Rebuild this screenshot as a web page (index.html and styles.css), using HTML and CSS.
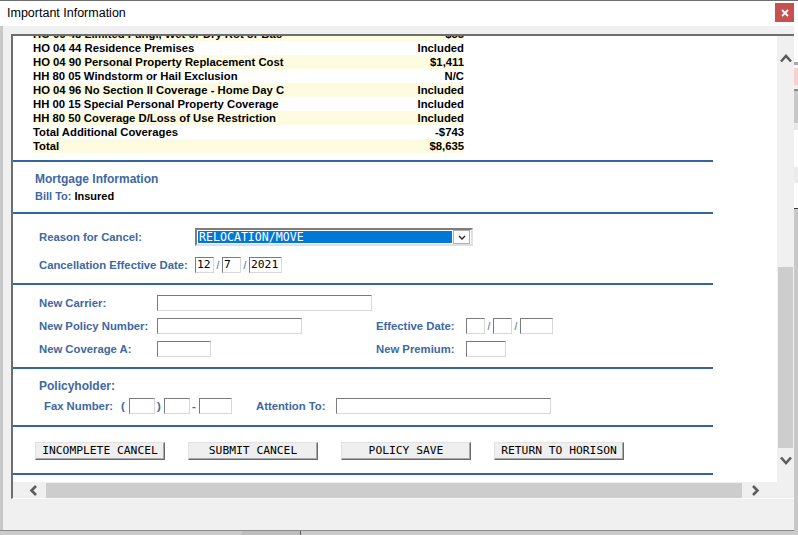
FILE: index.html
```html
<!DOCTYPE html>
<html>
<head>
<meta charset="utf-8">
<title>Important Information</title>
<link rel="stylesheet" href="styles.css">
</head>
<body>
<div class="screen">
  <div class="window">
    <div class="titlebar">
      <span class="title">Important Information</span>
      <div class="close"><svg width="8" height="8" viewBox="0 0 8 8"><path d="M1 1 L7 7 M7 1 L1 7" stroke="#fff" stroke-width="1.8" fill="none"/></svg></div>
    </div>
    <div class="wbody">
      <div class="band"></div>
      <div class="frame">
        <div class="viewport">
          <div class="content">
            <div class="cov-table">
              <div class="row alt"><span>HO 06 48 Limited Fungi, Wet or Dry Rot or Bac</span><span>$55</span></div>
              <div class="row"><span>HO 04 44 Residence Premises</span><span>Included</span></div>
              <div class="row alt"><span>HO 04 90 Personal Property Replacement Cost</span><span>$1,411</span></div>
              <div class="row"><span>HH 80 05 Windstorm or Hail Exclusion</span><span>N/C</span></div>
              <div class="row alt"><span>HO 04 96 No Section II Coverage - Home Day C</span><span>Included</span></div>
              <div class="row"><span>HH 00 15 Special Personal Property Coverage</span><span>Included</span></div>
              <div class="row alt"><span>HH 80 50 Coverage D/Loss of Use Restriction</span><span>Included</span></div>
              <div class="row"><span>Total Additional Coverages</span><span>-$743</span></div>
              <div class="row alt"><span>Total</span><span>$8,635</span></div>
            </div>
            <div class="rule"></div>
            <div class="sec-mort">
              <div class="heading">Mortgage Information</div>
              <div class="bill"><span class="lbl">Bill To:</span><span class="val">Insured</span></div>
            </div>
            <div class="rule"></div>
            <div class="sec-cancel">
              <span class="lbl">Reason for Cancel:</span>
              <div class="select">
                <div class="select-val">RELOCATION/MOVE</div>
                <div class="select-btn"><svg width="8" height="5" viewBox="0 0 8 5"><path d="M1 1 L4 4 L7 1" stroke="#222" stroke-width="1.3" fill="none"/></svg></div>
              </div>
              <span class="lbl">Cancellation Effective Date:</span>
              <div class="date">
                <div class="fld w19">12</div><span class="sep">/</span><div class="fld w19">7</div><span class="sep">/</span><div class="fld w33">2021</div>
              </div>
            </div>
            <div class="rule"></div>
            <div class="sec-new">
              <span class="lbl">New Carrier:</span>
              <div class="fld w215"></div>
              <span></span>
              <span></span>
              <span class="lbl">New Policy Number:</span>
              <div class="fld w145"></div>
              <span class="lbl">Effective Date:</span>
              <div class="date">
                <div class="fld w19"></div><span class="sep">/</span><div class="fld w19"></div><span class="sep">/</span><div class="fld w33"></div>
              </div>
              <span class="lbl">New Coverage A:</span>
              <div class="fld w54"></div>
              <span class="lbl">New Premium:</span>
              <div class="fld w40"></div>
            </div>
            <div class="rule"></div>
            <div class="sec-ph">
              <div class="heading">Policyholder:</div>
              <div class="fax">
                <span class="lbl fax-lbl">Fax Number:</span>
                <span class="lbl paren-l">(</span>
                <div class="fld w26"></div>
                <span class="lbl paren-r">)</span>
                <div class="fld w26"></div>
                <span class="lbl dash">-</span>
                <div class="fld w33"></div>
                <span class="lbl att-lbl">Attention To:</span>
                <div class="fld w215"></div>
              </div>
            </div>
            <div class="rule"></div>
            <div class="sec-btns">
              <div class="btn">INCOMPLETE CANCEL</div>
              <div class="btn">SUBMIT CANCEL</div>
              <div class="btn">POLICY SAVE</div>
              <div class="btn">RETURN TO HORISON</div>
            </div>
            <div class="rule"></div>
          </div>
        </div>
        <div class="vscroll">
          <div class="vs-top"></div>
          <div class="vs-arrow"><svg width="12" height="9" viewBox="0 0 12 9"><path d="M1 7.5 L6 2 L11 7.5" stroke="#5c5c5c" stroke-width="2.6" fill="none"/></svg></div>
          <div class="vs-track"></div>
          <div class="vs-thumb"></div>
          <div class="vs-gap"></div>
          <div class="vs-arrow"><svg width="12" height="9" viewBox="0 0 12 9"><path d="M1 1.5 L6 7 L11 1.5" stroke="#5c5c5c" stroke-width="2.6" fill="none"/></svg></div>
        </div>
        <div class="hscroll">
          <div class="hs-left"><svg width="9" height="11" viewBox="0 0 9 11"><path d="M7 1 L2.5 5.5 L7 10" stroke="#5c5c5c" stroke-width="2.6" fill="none"/></svg></div>
          <div class="hs-thumb"></div>
          <div class="hs-right"><svg width="9" height="11" viewBox="0 0 9 11"><path d="M2 1 L6.5 5.5 L2 10" stroke="#5c5c5c" stroke-width="2.6" fill="none"/></svg></div>
        </div>
      </div>
      <div class="wfoot"></div>
    </div>
  </div>
  <div class="outside-right">
    <div class="o1"></div><div class="o2"></div><div class="o3"></div><div class="o4"></div><div class="o5"></div><div class="o6"></div><div class="o7"></div><div class="o8"></div><div class="o9"></div><div class="o10"></div><div class="o11"></div><div class="o12"></div>
  </div>
  <div class="outside-bottom"><div class="ob1"></div><div class="ob2"></div></div>
</div>
</body>
</html>
```

FILE: styles.css
```css
html, body {
  margin: 0;
  padding: 0;
  background: #ffffff;
}
.screen {
  width: 798px;
  height: 535px;
  box-sizing: border-box;
  border-top: 1px solid #6f6f6f;
  display: grid;
  grid-template-columns: 794px 4px;
  grid-template-rows: 530px 4px;
  overflow: hidden;
}
.window {
  display: flex;
  flex-direction: column;
  background: #f0f0f0;
  font-family: "Liberation Sans", Arial, sans-serif;
}
.titlebar {
  height: 25px;
  background: #ffffff;
  display: flex;
  justify-content: space-between;
  align-items: flex-start;
}
.title {
  font-size: 12.5px;
  line-height: 24px;
  padding-left: 7px;
  color: #000;
}
.close {
  margin-top: 2px;
  width: 19px;
  height: 19px;
  background: #c75050;
  display: flex;
  align-items: center;
  justify-content: center;
}
.wbody {
  flex: 1;
  display: flex;
  flex-direction: column;
  box-shadow: inset 3px 0 0 #c8c8c8;
}
.band {
  height: 8px;
}
.frame {
  margin-left: 11px;
  display: grid;
  grid-template-columns: 764px 17px;
  grid-template-rows: 446px 16px;
  border-top: 2px solid #6e6e6e;
  border-left: 2px solid #6e6e6e;
  border-bottom: 1px solid #fbfbfb;
}
.viewport {
  background: #ffffff;
  overflow: hidden;
}
.content {
  margin-top: -9px;
  font-size: 11.3px;
  font-weight: bold;
}
.cov-table {
  width: 431px;
  margin-left: 20px;
  margin-bottom: 7px;
  color: #000;
}
.row {
  display: flex;
  justify-content: space-between;
  height: 14px;
  line-height: 14px;
  white-space: nowrap;
}
.row.alt {
  background: #fdfce1;
}
.rule {
  width: 700px;
  height: 2px;
  background: #336699;
}
.lbl {
  color: #3d68a3;
  white-space: nowrap;
  line-height: 14px;
}
.heading {
  color: #3d68a3;
  font-size: 12px;
  line-height: 14px;
}
.sec-mort {
  padding: 10px 0 9px 22px;
}
.bill {
  margin-top: 3px;
  line-height: 14px;
  font-size: 11px;
  display: flex;
}
.bill .val {
  color: #000;
  margin-left: 3px;
}
.sec-cancel {
  padding: 14px 0 10px 26px;
  display: grid;
  grid-template-columns: 156px auto;
  grid-template-rows: 18px 16px;
  row-gap: 11px;
  align-items: center;
  justify-items: start;
}
.select {
  width: 278px;
  height: 18px;
  box-sizing: border-box;
  border: 2px solid;
  border-color: #7d7d7d #e0e0e0 #e0e0e0 #7d7d7d;
  padding: 1px;
  display: flex;
  gap: 1px;
}
.select-val {
  flex: 1;
  background: #0078d7;
  color: #ffffff;
  font-family: "DejaVu Sans Mono", monospace;
  font-weight: normal;
  font-size: 11.6px;
  line-height: 12px;
  padding-left: 1px;
}
.select-btn {
  width: 17px;
  box-sizing: border-box;
  border: 1px solid #adadad;
  background: #fbfbfb;
  display: flex;
  align-items: center;
  justify-content: center;
  margin-top: -1px;
  margin-bottom: -1px;
}
.date {
  display: flex;
  align-items: center;
}
.sep {
  width: 8px;
  text-align: center;
  color: #3d68a3;
  font-weight: normal;
  font-size: 10px;
}
.fld {
  height: 16px;
  box-sizing: border-box;
  border: 1px solid;
  border-color: #7a7a7a #d8d8d8 #d8d8d8 #7a7a7a;
  background: #ffffff;
  font-family: "DejaVu Sans Mono", monospace;
  font-weight: normal;
  font-size: 11.3px;
  line-height: 14px;
  padding-left: 1px;
  color: #000;
}
.w19 { width: 19px; }
.w26 { width: 26px; }
.w33 { width: 33px; }
.w40 { width: 40px; }
.w54 { width: 54px; }
.w145 { width: 145px; }
.w215 { width: 215px; }
.sec-new {
  padding: 10px 0 10px 26px;
  display: grid;
  grid-template-columns: 118px 219px 90px auto;
  grid-template-rows: 16px 16px 16px;
  row-gap: 7px;
  align-items: center;
  justify-items: start;
}
.sec-ph {
  padding: 10px 0 11px 26px;
}
.fax {
  margin-top: 5px;
  height: 16px;
  padding-left: 5px;
  display: flex;
  align-items: center;
}
.fax-lbl { width: 77px; }
.paren-l { width: 8px; }
.paren-r { width: 9px; padding-left: 2px; box-sizing: border-box; }
.dash { width: 9px; padding-left: 2px; box-sizing: border-box; }
.att-lbl { width: 80px; margin-left: 24px; }
.sec-btns {
  padding: 15px 0 13px 22px;
  display: flex;
  gap: 23px;
}
.btn {
  width: 130px;
  height: 18px;
  box-sizing: border-box;
  background: #efefef;
  border: 1px solid;
  border-color: #e2e2e2 #6a6a6a #6a6a6a #e2e2e2;
  box-shadow: inset -1px -1px 0 #a8a8a8;
  font-family: "DejaVu Sans Mono", monospace;
  font-weight: normal;
  font-size: 11.3px;
  line-height: 15px;
  text-align: center;
  color: #000;
  white-space: nowrap;
}
.vscroll {
  background: #f0f0f0;
  display: flex;
  flex-direction: column;
}
.vs-top { height: 14px; }
.vs-arrow {
  height: 16px;
  display: flex;
  align-items: center;
  justify-content: center;
}
.vs-track { height: 201px; }
.vs-thumb {
  height: 181px;
  margin: 0 1px 0 1px;
  background: #cdcdcd;
}
.vs-gap { height: 4px; }
.hscroll {
  grid-column: 1 / 3;
  background: #f0f0f0;
  display: flex;
}
.hs-left {
  width: 33px;
  padding-left: 16px;
  box-sizing: border-box;
  display: flex;
  align-items: center;
}
.hs-thumb {
  width: 696px;
  margin-top: 1px;
  background: #cdcdcd;
}
.hs-right {
  flex: 1;
  padding-left: 9px;
  display: flex;
  align-items: center;
}
.wfoot {
  flex: 1;
  border-bottom: 1px solid #8c8c8c;
}
.outside-right {
  display: flex;
  flex-direction: column;
  background: #c8c8c8;
}
.o1 { height: 61px; background: #ffffff; }
.o2 { height: 3px; background: #a8a8a8; }
.o3 { height: 3px; background: #ffffff; }
.o4 { height: 17px; background: #f8d0d0; }
.o5 { height: 4px; background: #f0f0f0; }
.o6 { height: 2px; background: #8a8a8a; }
.o7 { height: 32px; background: #c8c8c8; }
.o8 { height: 7px; background: #e6e6e6; }
.o9 { height: 37px; background: #ffffff; }
.o10 { height: 16px; background: #ececec; }
.o11 { height: 25px; background: #ffffff; }
.o12 { height: 1px; background: #3a3a3a; }
.outside-bottom {
  grid-column: 1 / 3;
  background: #cbcbcb;
  display: flex;
}
.ob1 { width: 242px; }
.ob2 { width: 58px; background: #bdbdbd; border-right: 1px solid #5a5a5a; }
```
